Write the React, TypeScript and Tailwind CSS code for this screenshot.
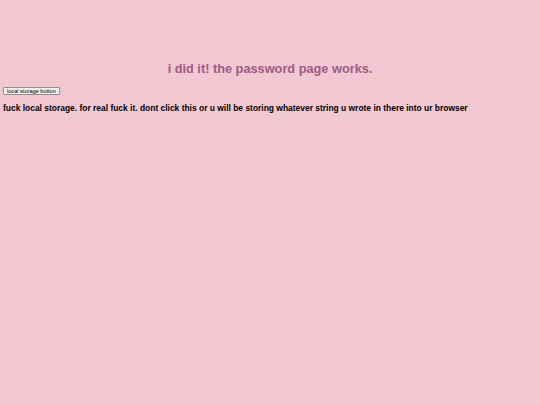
export default function App() {
  return (
    <div className="min-h-[405px] w-[540px] bg-[#f1c8d2] font-['Liberation_Sans',Arial,sans-serif] pt-[60px]">
      <h1 className="text-center text-[12.75px] font-bold text-[#a05a83] leading-[18px]">i did it! the password page works.</h1>
      <div className="px-[3px] mt-[9px]">
        <button className="block text-[5.6px] leading-[6px] px-[3px] py-0 bg-[#efefef] border border-[#8f8f8f] rounded-[1px] text-black">local storage button</button>
        <p className="mt-[8px] text-[8.45px] font-bold text-black leading-[11px]">fuck local storage. for real fuck it. dont click this or u will be storing whatever string u wrote in there into ur browser</p>
      </div>
    </div>
  );
}
